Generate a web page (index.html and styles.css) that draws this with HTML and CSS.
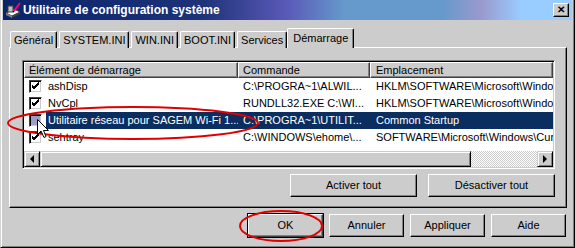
FILE: index.html
```html
<!DOCTYPE html>
<html lang="fr">
<head>
    <meta charset="UTF-8">
    <title>Utilitaire de configuration système</title>
    <link rel="stylesheet" href="styles.css">
</head>
<body>
    <div class="window">
        <div class="titlebar">
            <svg class="app-icon" width="16" height="16" viewBox="0 0 16 16">
                <polygon points="1,11 9,7 15,10 7,14" fill="#fff" stroke="#404040" stroke-width="1"/>
                <polygon points="1,11 7,14 7,16 1,13" fill="#808080"/>
                <polygon points="7,14 15,10 15,12 7,16" fill="#404040"/>
                <rect x="3" y="4" width="5" height="6" fill="#c0c0c0" stroke="#404040" stroke-width="1"/>
                <line x1="9" y1="9" x2="15" y2="1" stroke="#ff0080" stroke-width="2"/>
                <line x1="8" y1="10" x2="9" y2="9" stroke="#000" stroke-width="1.5"/>
            </svg>
            <span class="title">Utilitaire de configuration système</span>
            <span class="close-btn">&#x2715;</span>
        </div>

        <div class="tabs">
            <div class="tab">Général</div>
            <div class="tab">SYSTEM.INI</div>
            <div class="tab">WIN.INI</div>
            <div class="tab">BOOT.INI</div>
            <div class="tab">Services</div>
            <div class="tab tab-active">Démarrage</div>
        </div>

        <div class="panel">
            <div class="list">
                <div class="list-head">
                    <div class="col col1">Élément de démarrage</div>
                    <div class="col col2">Commande</div>
                    <div class="col col3">Emplacement</div>
                </div>
                <div class="list-body">
                    <div class="row">
                        <div class="col1 cell-name"><span class="check checked"></span><span class="label">ashDisp</span></div>
                        <div class="col2 cell">C:\PROGRA~1\ALWIL...</div>
                        <div class="col3 cell">HKLM\SOFTWARE\Microsoft\Window</div>
                    </div>
                    <div class="row">
                        <div class="col1 cell-name"><span class="check checked"></span><span class="label">NvCpl</span></div>
                        <div class="col2 cell">RUNDLL32.EXE C:\WI...</div>
                        <div class="col3 cell">HKLM\SOFTWARE\Microsoft\Window</div>
                    </div>
                    <div class="row row-selected">
                        <div class="col1 cell-name"><span class="check pressed"></span><span class="label">Utilitaire réseau pour SAGEM Wi-Fi 1...</span></div>
                        <div class="col2 cell">C:\PROGRA~1\UTILIT...</div>
                        <div class="col3 cell">Common Startup</div>
                    </div>
                    <div class="row">
                        <div class="col1 cell-name"><span class="check checked"></span><span class="label">sehtray</span></div>
                        <div class="col2 cell">C:\WINDOWS\ehome\...</div>
                        <div class="col3 cell">SOFTWARE\Microsoft\Windows\Curr</div>
                    </div>
                </div>
                <div class="hscroll">
                    <div class="scroll-btn"><span class="arrow-left"></span></div>
                    <div class="scroll-thumb"></div>
                    <div class="scroll-track"></div>
                    <div class="scroll-btn"><span class="arrow-right"></span></div>
                </div>
            </div>
            <div class="panel-buttons">
                <div class="btn btn-wide">Activer tout</div>
                <div class="btn btn-wide">Désactiver tout</div>
            </div>
        </div>

        <div class="footer">
            <div class="btn btn-default">OK</div>
            <div class="btn">Annuler</div>
            <div class="btn">Appliquer</div>
            <div class="btn">Aide</div>
        </div>

        <!-- annotations tracées par dessus la capture -->
        <svg class="overlay" width="575" height="248" viewBox="0 0 575 248">
            <ellipse cx="132" cy="123" rx="125" ry="16" fill="none" stroke="#e00000" stroke-width="2"/>
            <ellipse cx="280" cy="226" rx="41" ry="15" fill="none" stroke="#e00000" stroke-width="2"/>
            <path d="M36.5,119.5 L36.5,134.5 L40,131 L43,137.5 L45,136.5 L42.5,130.5 L47.5,130.5 Z" fill="#fff" stroke="#000" stroke-width="1"/>
        </svg>
    </div>
</body>
</html>
```

FILE: styles.css
```css
body {
    margin: 0;
    background: #cccccc;
    font-family: 'Liberation Sans', Arial, sans-serif;
    font-size: 11px;
    color: #000;
}

.window {
    position: relative;
    width: 575px;
    height: 248px;
    box-sizing: border-box;
    background: #cccccc;
    padding: 0 2px 2px 2px;
    border-left: 1px solid #d4d4d4;
    border-right: 1px solid #000;
    border-bottom: 1px solid #000;
    box-shadow: inset 1px 0 #fff, inset -1px -1px #808080;
}

.titlebar {
    height: 20px;
    display: flex;
    align-items: center;
    padding: 0 3px 0 2px;
    background: linear-gradient(90deg, #0a246a 0%, #1e3278 35%, #5a5ab8 50%, #6699cc 60%, #6699cc 77%, #9999cc 84%, #99ccff 91%, #99ccff 100%);
}

.app-icon {
    margin-right: 2px;
}

.title {
    flex: 1;
    color: #fff;
    font-weight: bold;
    font-size: 12px;
}

.close-btn {
    width: 14px;
    height: 12px;
    line-height: 12px;
    text-align: center;
    font-size: 10px;
    font-weight: bold;
    background: #cccccc;
    border: 1px solid;
    border-color: #fff #000 #000 #fff;
    box-shadow: inset -1px -1px #808080;
}

.tabs {
    display: flex;
    align-items: flex-end;
    height: 20px;
    padding: 8px 0 0 7px;
    margin-bottom: -1px;
    position: relative;
}

.tab {
    height: 16px;
    line-height: 16px;
    padding: 0 3px;
    margin-right: 2px;
    border: 1px solid #fff;
    border-bottom: none;
    border-right: 1px solid #000;
    box-shadow: inset -1px 0 #808080;
    border-radius: 2px 2px 0 0;
    background: #cccccc;
}

.tab-active {
    height: 19px;
    line-height: 18px;
    padding: 0 5px;
    margin-left: -2px;
    position: relative;
    z-index: 1;
}

.panel {
    margin: 0 5px 0 6px;
    height: 161px;
    box-sizing: border-box;
    border: 1px solid;
    border-color: #fff #000 #000 #fff;
    box-shadow: inset -1px -1px #808080;
    padding: 12px 11px 0 12px;
}

.list {
    height: 109px;
    box-sizing: border-box;
    border: 1px solid;
    border-color: #808080 #fff #fff #808080;
    box-shadow: inset 1px 1px #000, inset -1px -1px #cccccc;
    padding: 1px;
    background: #fff;
    display: flex;
    flex-direction: column;
    overflow: hidden;
}

.list-head {
    display: flex;
    height: 16px;
    flex: none;
}

.list-head .col {
    box-sizing: border-box;
    height: 16px;
    line-height: 14px;
    background: #cccccc;
    border: 1px solid;
    border-color: #fff #404040 #404040 #fff;
    box-shadow: inset -1px -1px #808080;
    padding-left: 4px;
    white-space: nowrap;
    overflow: hidden;
}

.col1 {
    width: 214px;
    flex: none;
}

.col2 {
    width: 132px;
    flex: none;
}

.col3 {
    flex: 1;
    min-width: 0;
}

.list-head .col3 {
    padding-left: 5px;
}

.list-body {
    flex: 1;
}

.row {
    display: flex;
    height: 17px;
    line-height: 17px;
    white-space: nowrap;
}

.cell-name {
    display: flex;
    align-items: center;
    padding-left: 5px;
    box-sizing: border-box;
}

.cell {
    box-sizing: border-box;
    padding-left: 5px;
    overflow: hidden;
}

.col3.cell {
    padding-left: 6px;
}

.label {
    flex: 1;
    margin-left: 4px;
    padding-left: 2px;
    overflow: hidden;
}

.row-selected .label,
.row-selected .cell {
    background: #0a2e60;
    color: #fff;
}

.check {
    width: 13px;
    height: 13px;
    box-sizing: border-box;
    border: 1px solid;
    border-color: #404040 #fff #fff #404040;
    box-shadow: inset 1px 1px #000, inset -1px -1px #cccccc;
    background: #fff;
    flex: none;
}

.checked {
    background: #fff url("data:image/svg+xml,%3Csvg xmlns='http://www.w3.org/2000/svg' width='11' height='11'%3E%3Cpath d='M2 5 L4 7 L9 2 M2 6 L4 8 L9 3 M2 4 L4 6 L9 1' stroke='%23000' fill='none' stroke-width='1'/%3E%3C/svg%3E") no-repeat 0 0;
}

.pressed {
    background: #9c9cc8;
}

.hscroll {
    display: flex;
    height: 16px;
    flex: none;
    margin-top: auto;
}

.scroll-btn {
    width: 14px;
    height: 14px;
    background: #cccccc;
    border: 1px solid;
    border-color: #cccccc #000 #000 #cccccc;
    box-shadow: inset 1px 1px #fff, inset -1px -1px #808080;
    display: flex;
    align-items: center;
    justify-content: center;
    flex: none;
}

.arrow-left {
    width: 0;
    height: 0;
    border-top: 4px solid transparent;
    border-bottom: 4px solid transparent;
    border-right: 4px solid #000;
}

.arrow-right {
    width: 0;
    height: 0;
    border-top: 4px solid transparent;
    border-bottom: 4px solid transparent;
    border-left: 4px solid #000;
}

.scroll-thumb {
    width: 429px;
    height: 14px;
    background: #cccccc;
    border: 1px solid;
    border-color: #cccccc #000 #000 #cccccc;
    box-shadow: inset 1px 1px #fff, inset -1px -1px #808080;
    flex: none;
}

.scroll-track {
    flex: 1;
    background: repeating-conic-gradient(#fff 0 25%, #cccccc 0 50%) 0 0 / 2px 2px;
}

.panel-buttons {
    display: flex;
    justify-content: flex-end;
    gap: 11px;
    margin-top: 5px;
}

.btn {
    width: 73px;
    height: 21px;
    line-height: 21px;
    text-align: center;
    background: #cccccc;
    border: 1px solid;
    border-color: #fff #000 #000 #fff;
    box-shadow: inset -1px -1px #808080;
}

.btn-wide {
    width: 125px;
}

.btn-default {
    outline: 1px solid #000;
    outline-offset: 0;
    border-color: #fff #404040 #404040 #fff;
}

.footer {
    display: flex;
    justify-content: flex-end;
    gap: 6px;
    padding: 6px 6px 0 0;
}

.overlay {
    position: absolute;
    left: 0;
    top: 0;
    pointer-events: none;
}
```
